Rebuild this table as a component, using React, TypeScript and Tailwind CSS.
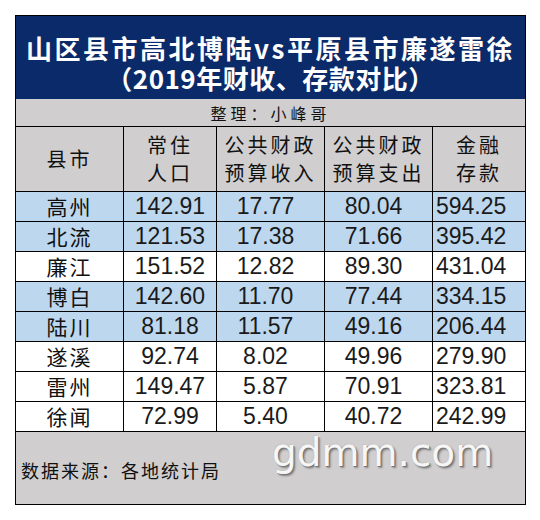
import React from 'react';

type Row = { name: string; pop: string; income: string; spend: string; deposit: string; mountain: boolean };

const rows: Row[] = [
  { name: '高州', pop: '142.91', income: '17.77', spend: '80.04', deposit: '594.25', mountain: true },
  { name: '北流', pop: '121.53', income: '17.38', spend: '71.66', deposit: '395.42', mountain: true },
  { name: '廉江', pop: '151.52', income: '12.82', spend: '89.30', deposit: '431.04', mountain: false },
  { name: '博白', pop: '142.60', income: '11.70', spend: '77.44', deposit: '334.15', mountain: true },
  { name: '陆川', pop: '81.18', income: '11.57', spend: '49.16', deposit: '206.44', mountain: true },
  { name: '遂溪', pop: '92.74', income: '8.02', spend: '49.96', deposit: '279.90', mountain: false },
  { name: '雷州', pop: '149.47', income: '5.87', spend: '70.91', deposit: '323.81', mountain: false },
  { name: '徐闻', pop: '72.99', income: '5.40', spend: '40.72', deposit: '242.99', mountain: false },
];

const cjk = "font-['Noto_Sans_CJK_SC',sans-serif]";
const num = "font-['Liberation_Sans','Noto_Sans_CJK_SC',sans-serif] text-[23px] text-[#1a1a1a]";

function HeaderCell({ lines }: { lines: string[] }) {
  return (
    <div className={`flex h-[64px] flex-col items-center justify-center bg-[#d0cece] text-[20px] leading-[28px] tracking-[3px] text-[#111] ${cjk}`}>
      {lines.map((l) => (
        <span key={l}>{l}</span>
      ))}
    </div>
  );
}

export default function App() {
  return (
    <div className="min-h-[520px] bg-white pl-[15px] pt-[15px]">
      <div className="w-[511px] border border-black bg-black">
        {/* title */}
        <div className={`flex h-[83px] flex-col items-center justify-center gap-[3px] bg-[#0b2a69] pt-[9px] font-bold text-white ${cjk}`}>
          <div className="text-[26px] leading-[27px] tracking-[2.5px]">山区县市高北博陆vs平原县市廉遂雷徐</div>
          <div className="text-[26px] leading-[27px] tracking-[0.5px]">（2019年财收、存款对比）</div>
        </div>
        <div className={`flex h-[27px] items-center justify-center bg-[#d0cece] text-[16px] tracking-[4px] text-[#111] ${cjk}`}>
          整理：小峰哥
        </div>

        {/* table */}
        <div className="grid grid-cols-[107px_92px_107px_107px_92px] gap-px pt-px">
          <HeaderCell lines={['县市']} />
          <HeaderCell lines={['常住', '人口']} />
          <HeaderCell lines={['公共财政', '预算收入']} />
          <HeaderCell lines={['公共财政', '预算支出']} />
          <HeaderCell lines={['金融', '存款']} />

          {rows.map((r) => {
            const bg = r.mountain ? 'bg-[#bdd7ee]' : 'bg-white';
            return (
              <React.Fragment key={r.name}>
                <div className={`flex h-[29px] items-center justify-center ${bg} text-[21px] tracking-[2px] text-[#111] ${cjk}`}>
                  {r.name}
                </div>
                <div className={`flex h-[29px] items-center justify-center ${bg} ${num}`}>{r.pop}</div>
                <div className={`flex h-[29px] items-center justify-center pr-[10px] ${bg} ${num}`}>{r.income}</div>
                <div className={`flex h-[29px] items-center justify-center pr-[10px] ${bg} ${num}`}>{r.spend}</div>
                <div className={`flex h-[29px] items-center pl-[3px] ${bg} ${num}`}>{r.deposit}</div>
              </React.Fragment>
            );
          })}
        </div>

        {/* footer */}
        <div className="relative mt-px flex h-[72px] items-center bg-[#d0cece] pl-[5px] pt-[4px]">
          <span className={`text-[18px] tracking-[2px] text-[#111] ${cjk}`}>数据来源：各地统计局</span>
          <span className="absolute left-[256px] top-[1px] font-['DejaVu_Sans',sans-serif] text-[39px] leading-none text-[#f6f6f6] [text-shadow:1px_1px_0_#777,2px_2px_2px_rgba(0,0,0,0.35),-1px_-1px_0_#c8c8c8]">
            gdmm.com
          </span>
        </div>
      </div>
    </div>
  );
}
